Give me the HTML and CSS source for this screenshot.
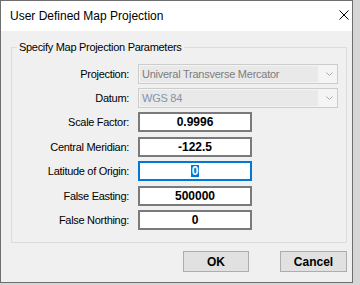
FILE: index.html
```html
<!DOCTYPE html>
<html>
<head>
<meta charset="utf-8">
<link rel="stylesheet" href="styles.css">
</head>
<body>
<div class="window">
  <div class="titlebar">
    <span class="title">User Defined Map Projection</span>
    <svg class="close" width="10" height="10" viewBox="0 0 10 10"><path d="M0.5 0.5 L9.5 9.5 M9.5 0.5 L0.5 9.5" stroke="#000" stroke-width="1" fill="none"/></svg>
  </div>
  <div class="client">
    <fieldset class="group">
      <legend class="group-label">Specify Map Projection Parameters</legend>
      <div class="rows">
        <span class="lbl">Projection:</span>
        <div class="combo"><span class="combo-text">Univeral Transverse Mercator</span><span class="combo-btn"><svg width="7" height="4" viewBox="0 0 7 4"><path d="M0.5 0.5 L3.5 3.5 L6.5 0.5" stroke="#a8a8a8" stroke-width="1" fill="none"/></svg></span></div>
        <span class="lbl">Datum:</span>
        <div class="combo"><span class="combo-text datum">WGS 84</span><span class="combo-btn"><svg width="7" height="4" viewBox="0 0 7 4"><path d="M0.5 0.5 L3.5 3.5 L6.5 0.5" stroke="#a8a8a8" stroke-width="1" fill="none"/></svg></span></div>
        <span class="lbl">Scale Factor:</span>
        <div class="field">0.9996</div>
        <span class="lbl">Central Meridian:</span>
        <div class="field">-122.5</div>
        <span class="lbl">Latitude of Origin:</span>
        <div class="field focus"><span class="sel">0</span></div>
        <span class="lbl">False Easting:</span>
        <div class="field">500000</div>
        <span class="lbl">False Northing:</span>
        <div class="field">0</div>
      </div>
    </fieldset>
    <div class="buttons">
      <button class="btn btn-ok">OK</button>
      <button class="btn btn-cancel">Cancel</button>
    </div>
  </div>
</div>
</body>
</html>
```
FILE: styles.css
```css
html, body {
  margin: 0;
  padding: 0;
}
body {
  width: 360px;
  height: 285px;
  overflow: hidden;
  background: #d6d6d6;
  font-family: "Liberation Sans", Arial, sans-serif;
}
.window {
  width: 353px;
  height: 283px;
  box-sizing: border-box;
  border: 1px solid #6e6e6e;
  background: #f0f0f0;
  display: flex;
  flex-direction: column;
}
.titlebar {
  height: 30px;
  flex: none;
  background: #ffffff;
  display: flex;
  align-items: center;
  padding-left: 9px;
}
.title {
  font-size: 12px;
  line-height: 14px;
  color: #000;
}
.close {
  margin-left: auto;
  margin-right: 3px;
  align-self: flex-start;
  margin-top: 9px;
  display: block;
}
.client {
  padding: 0 5px 0 10px;
  display: flex;
  flex-direction: column;
}
.group {
  margin: 10px 0 0 0;
  padding: 0;
  border: 1px solid #dcdcdc;
  min-width: 0;
}
.group-label {
  margin-left: 5px;
  padding: 0 2px;
  font-size: 11px;
  line-height: 13px;
  letter-spacing: -0.3px;
  color: #000;
}
.rows {
  display: grid;
  grid-template-columns: 117px 200px;
  column-gap: 9px;
  row-gap: 4.5px;
  align-items: center;
  padding: 10px 0 12px 0;
}
.lbl {
  text-align: right;
  font-size: 11px;
  letter-spacing: -0.3px;
  color: #000;
  white-space: nowrap;
}
.combo {
  height: 19.5px;
  box-sizing: border-box;
  border: 1px solid #cccccc;
  background: #f4f4f4;
  padding: 1px;
  display: flex;
}
.combo-text {
  flex: 1;
  background: #e9e9e9;
  font-size: 11px;
  letter-spacing: -0.25px;
  color: #7d7d7d;
  padding-left: 2px;
  display: flex;
  align-items: center;
  white-space: nowrap;
}
.combo-text.datum {
  color: #8093ac;
}
.combo-btn {
  width: 18px;
  display: flex;
  align-items: center;
  justify-content: flex-end;
  padding-right: 3px;
  box-sizing: border-box;
}
.combo-btn svg {
  display: block;
}
.field {
  width: 114px;
  height: 20px;
  box-sizing: border-box;
  border: 2px solid #7a7a7a;
  background: #ffffff;
  font-size: 12px;
  font-weight: bold;
  color: #000;
  display: flex;
  align-items: center;
  justify-content: center;
}
.field.focus {
  border-color: #0078d7;
}
.sel {
  display: inline-block;
  background: #0078d7;
  color: #fff;
  height: 12px;
  line-height: 12px;
  padding: 0 1px;
}
.buttons {
  margin-top: 8px;
  display: flex;
  justify-content: flex-end;
  gap: 31px;
}
.btn {
  height: 21px;
  box-sizing: border-box;
  border: 1px solid #adadad;
  background: #e1e1e1;
  font-family: "Liberation Sans", Arial, sans-serif;
  font-size: 12px;
  font-weight: bold;
  color: #000;
  padding: 0;
  border-radius: 0;
}
.btn-ok {
  width: 66px;
}
.btn-cancel {
  width: 67px;
}
```
